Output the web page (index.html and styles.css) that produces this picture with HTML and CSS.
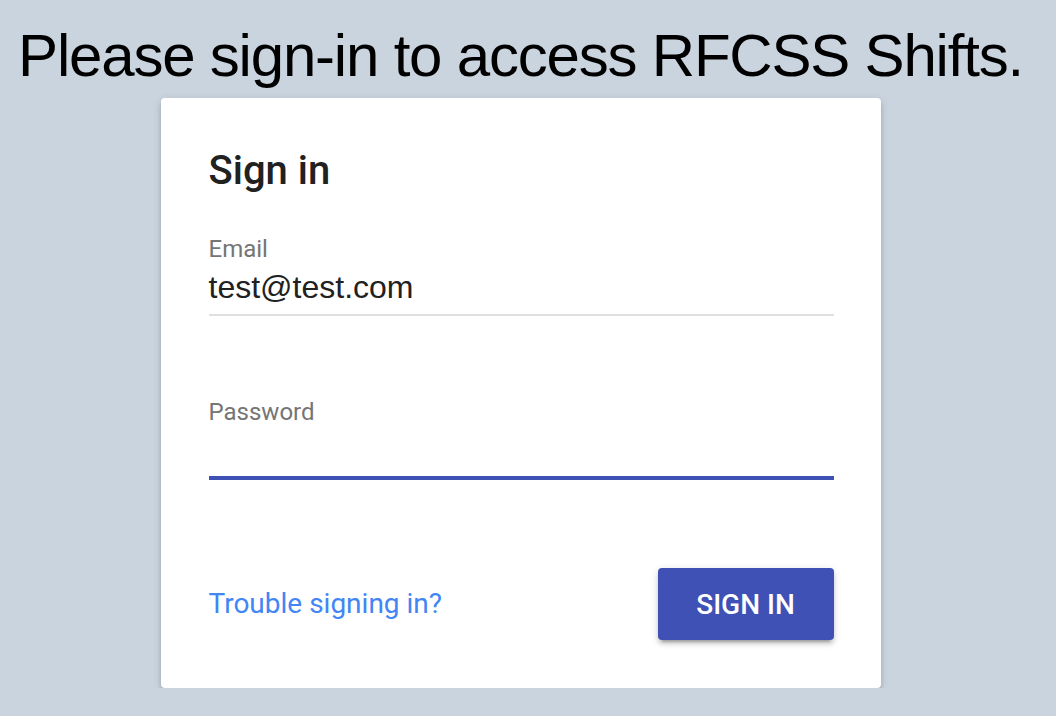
FILE: index.html
```html
<!DOCTYPE html>
<html>
<head>
<meta charset="utf-8">
<link rel="stylesheet" href="styles.css">
</head>
<body>
<div class="page">
  <h1 class="headline">Please sign-in to access RFCSS Shifts.</h1>
  <div class="card">
    <h2 class="card-title">Sign in</h2>
    <div class="field">
      <label class="field-label">Email</label>
      <div class="field-input">test@test.com</div>
    </div>
    <div class="field field-focused">
      <label class="field-label">Password</label>
      <div class="field-input"></div>
    </div>
    <div class="card-footer">
      <a class="link" href="#">Trouble signing in?</a>
      <button class="btn">SIGN IN</button>
    </div>
  </div>
</div>
</body>
</html>
```

FILE: styles.css
```css
html, body {
  margin: 0;
  padding: 0;
  background: #cad4df;
}
.page {
  width: 1041px;
  display: flex;
  flex-direction: column;
  align-items: center;
}
.headline {
  font-family: "Liberation Sans", Arial, sans-serif;
  font-weight: normal;
  font-size: 60px;
  line-height: 70px;
  letter-spacing: -1.2px;
  white-space: nowrap;
  color: #000;
  margin: 21px 0 7px;
  text-align: center;
}
.card {
  width: 720px;
  box-sizing: border-box;
  background: #fff;
  border-radius: 4px;
  padding: 49px 47px 48px 48px;
  box-shadow: 0 4px 4px 0 rgba(0,0,0,.14), 0 6px 2px -4px rgba(0,0,0,.2), 0 2px 10px 0 rgba(0,0,0,.12);
  font-family: Roboto, "Liberation Sans", sans-serif;
}
.card-title {
  margin: 0;
  font-size: 40px;
  font-weight: 500;
  line-height: 48px;
  color: #212121;
}
.field {
  display: flex;
  flex-direction: column;
  border-bottom: 2px solid #e0e0e0;
  padding-bottom: 7px;
  margin-top: 42px;
}
.field + .field {
  margin-top: 84px;
}
.field-focused {
  border-bottom: 4px solid #3f51b5;
  padding-bottom: 6px;
}
.field-label {
  font-size: 24px;
  line-height: 24px;
  color: #757575;
  height: 24px;
}
.field-input {
  margin-top: 6px;
  font-family: "Liberation Sans", Arial, sans-serif;
  font-size: 32px;
  line-height: 40px;
  height: 40px;
  color: #212121;
}
.card-footer {
  margin-top: 88px;
  display: flex;
  justify-content: space-between;
  align-items: center;
}
.link {
  color: #4285f4;
  text-decoration: none;
  font-size: 28px;
  line-height: 32px;
}
.btn {
  width: 176px;
  height: 72px;
  border: none;
  border-radius: 4px;
  background: #3f51b5;
  color: #fff;
  font-family: Roboto, "Liberation Sans", sans-serif;
  font-weight: 500;
  font-size: 28px;
  letter-spacing: 0;
  box-shadow: 0 4px 4px 0 rgba(0,0,0,.14), 0 6px 2px -4px rgba(0,0,0,.2), 0 2px 10px 0 rgba(0,0,0,.12);
  padding: 0;
}
```
